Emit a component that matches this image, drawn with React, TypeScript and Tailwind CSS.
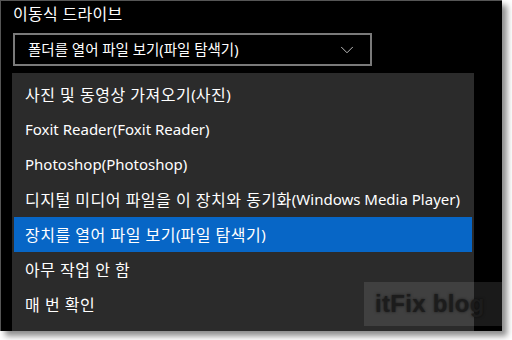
import { ChevronDown } from "lucide-react";

const items = [
    "사진 및 동영상 가져오기(사진)",
    "Foxit Reader(Foxit Reader)",
    "Photoshop(Photoshop)",
    "디지털 미디어 파일을 이 장치와 동기화(Windows Media Player)",
    "장치를 열어 파일 보기(파일 탐색기)",
    "아무 작업 안 함",
    "매 번 확인",
];

const font = { fontFamily: '"Noto Sans", "Noto Sans CJK KR", sans-serif' };

// Hangul runs render a touch larger than latin ones (like Malgun Gothic next to Segoe UI)
const Mixed = ({ text }: { text: string }) => {
    const parts = text.match(/[\uac00-\ud7a3]+(?:\s+[\uac00-\ud7a3]+)*|[^\uac00-\ud7a3]+/g) ?? [];
    return (
        <>
            {parts.map((p, i) =>
                /[\uac00-\ud7a3]/.test(p) ? (
                    <span key={i} className="text-[16px] tracking-[0.5px]">{p}</span>
                ) : (
                    <span key={i} className="text-[15px] whitespace-pre">{p}</span>
                )
            )}
        </>
    );
};

const App = () => {
    return (
        <div className="w-[512px] h-[340px] bg-white overflow-hidden">
            <div
                className="relative w-[502px] h-[331px] bg-black border-t border-l border-[#555] overflow-hidden shadow-[5px_5px_6px_rgba(0,0,0,0.45)] text-white"
                style={font}
            >
                {/* settings page behind the menu */}
                <div className="flex flex-col pl-[12px] pt-[3px]">
                    <h2 className="text-[16px] leading-[20px] tracking-[0.3px]">이동식 드라이브</h2>
                    <div className="mt-[9px] w-[359px] h-[33px] border-2 border-[#7a7a7a] flex items-center justify-between pl-[13px] pr-[12px]">
                        <span className="text-[14.5px] leading-none">폴더를 열어 파일 보기(파일 탐색기)</span>
                        <ChevronDown size={22} strokeWidth={1} className="text-[#cfcfcf]" />
                    </div>
                    <h2 className="mt-[251px] text-[16px] leading-[20px]">메모리 카드</h2>
                </div>

                {/* open dropdown */}
                <div className="absolute left-[11px] top-[72px] w-[462px] h-[260px] bg-[#2b2b2b] pt-[4px] flex flex-col">
                    {items.map((label, i) => (
                        <div
                            key={i}
                            className={
                                "mx-[2px] h-[35px] flex items-center pl-[11px] whitespace-nowrap " +
                                (i === 4 ? "bg-[#0766c6]" : "")
                            }
                        >
                            <Mixed text={label} />
                        </div>
                    ))}
                </div>

                {/* watermark */}
                <div className="absolute left-[363px] top-[281px] w-[140px] h-[44px] bg-white/10 flex items-center pl-[11px]">
                    <span
                        className="text-[24px] font-bold tracking-[0.3px] text-[#1c1c1c] [text-shadow:0_0_3px_rgba(0,0,0,0.6)]"
                        style={{ fontFamily: '"Liberation Sans", sans-serif' }}
                    >
                        itFix blog
                    </span>
                </div>
            </div>
        </div>
    );
};

export default App;
